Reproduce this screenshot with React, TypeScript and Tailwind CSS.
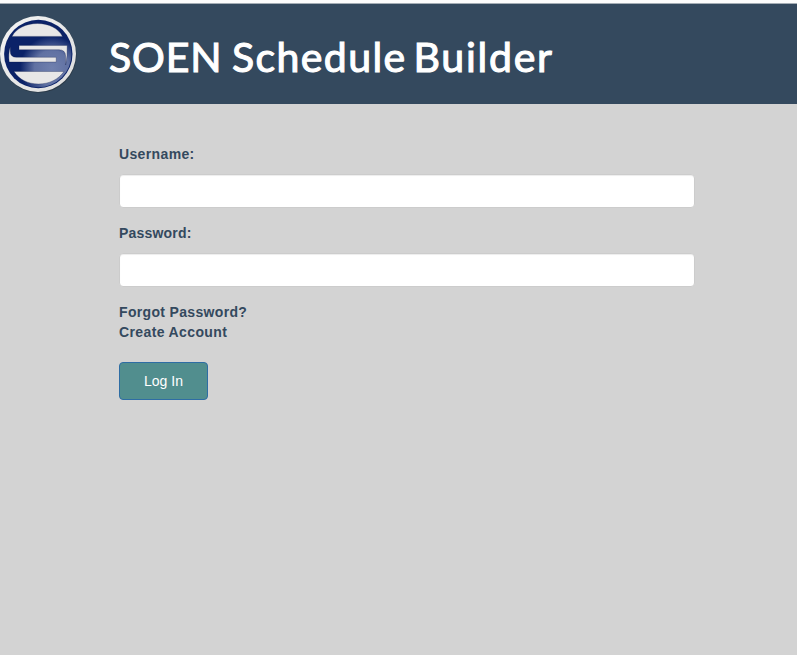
import React from "react";

function Logo() {
  return (
    <svg width="78" height="80" viewBox="0 0 78 80" className="shrink-0">
      <defs>
        <radialGradient id="shine" gradientUnits="userSpaceOnUse" cx="52" cy="54" r="32">
          <stop offset="0" stopColor="#7080ae" />
          <stop offset="0.55" stopColor="#6a7aa9" stopOpacity="0.9" />
          <stop offset="1" stopColor="#6a7aa9" stopOpacity="0" />
        </radialGradient>
        <linearGradient id="rim" x1="0" y1="0" x2="1" y2="1">
          <stop offset="0" stopColor="#f4f4f4" />
          <stop offset="1" stopColor="#dcdcdc" />
        </linearGradient>
      </defs>
      <circle cx="38.6" cy="40.8" r="38" fill="#26333f" opacity="0.7" />
      <circle cx="38" cy="40" r="38" fill="url(#rim)" />
      <circle cx="38.3" cy="40" r="34.2" fill="#0b2268" />
      <circle cx="38.3" cy="40" r="33.2" fill="url(#shine)" />
      <g fill="#e8e7e7" stroke="#091746" strokeOpacity="0.6" strokeWidth="0.5">
        <path d="M12 22.4C16 14.5 26 9.5 37.5 9.5S58.5 14.5 62.5 22.4Z" />
        <path d="M14 57.5H64C58.5 65.5 49 70 38.5 70S19 65.5 14 57.5Z" />
        <path d="M19 31.4H67.2Q67.6 42 65.6 51V42Q65.4 35.7 59 35.7H19Z" />
        <path d="M10.2 33V37Q10.2 43.3 16.5 43.3H56.2V48H9.2C8.5 43 8.7 37 10.2 33Z" />
      </g>
    </svg>
  );
}

function Field({ label, type, tracking }: { label: string; type: string; tracking: string }) {
  return (
    <label className="mb-[15px] block">
      <span className={`mb-[10px] block ${tracking}`}>{label}</span>
      <input type={type} className="block h-[34px] w-full rounded border border-[#ccc] bg-white px-3 shadow-[inset_0_1px_1px_rgba(0,0,0,0.075)]" />
    </label>
  );
}

export default function App() {
  return (
    <div className="min-h-screen bg-[#d3d3d3] font-['Liberation_Sans',Arial,sans-serif] text-sm leading-5 text-[#34495e]">
      <div className="h-[3px] bg-[#fcfcfc]" />
      <div className="h-px bg-[#a4adb5]" />
      <header className="flex h-[100px] items-center bg-[#34495e]">
        <Logo />
        <h1 className="ml-[31px] pt-1 font-[Lato,sans-serif] text-[41px] leading-none font-normal tracking-[1.4px] whitespace-nowrap text-white [-webkit-text-stroke:1.1px_white] [word-spacing:-5px]">
          <span className="tracking-[0.8px] [word-spacing:-1.5px]">SOEN </span>
          Schedule <span className="tracking-[1.75px]">Builder</span>
        </h1>
      </header>
      <form className="ml-[119px] w-[576px] pt-10 font-bold">
        <Field label="Username:" type="text" tracking="tracking-[0.36px]" />
        <Field label="Password:" type="password" tracking="tracking-[0.2px]" />
        <a className="block tracking-[0.33px]">Forgot Password?</a>
        <a className="block tracking-[0.38px]">Create Account</a>
        <button type="button" className="mt-5 h-[38px] w-[89px] rounded border border-[#2e6da4] bg-[#518e8e] font-normal text-white">Log In</button>
      </form>
    </div>
  );
}
